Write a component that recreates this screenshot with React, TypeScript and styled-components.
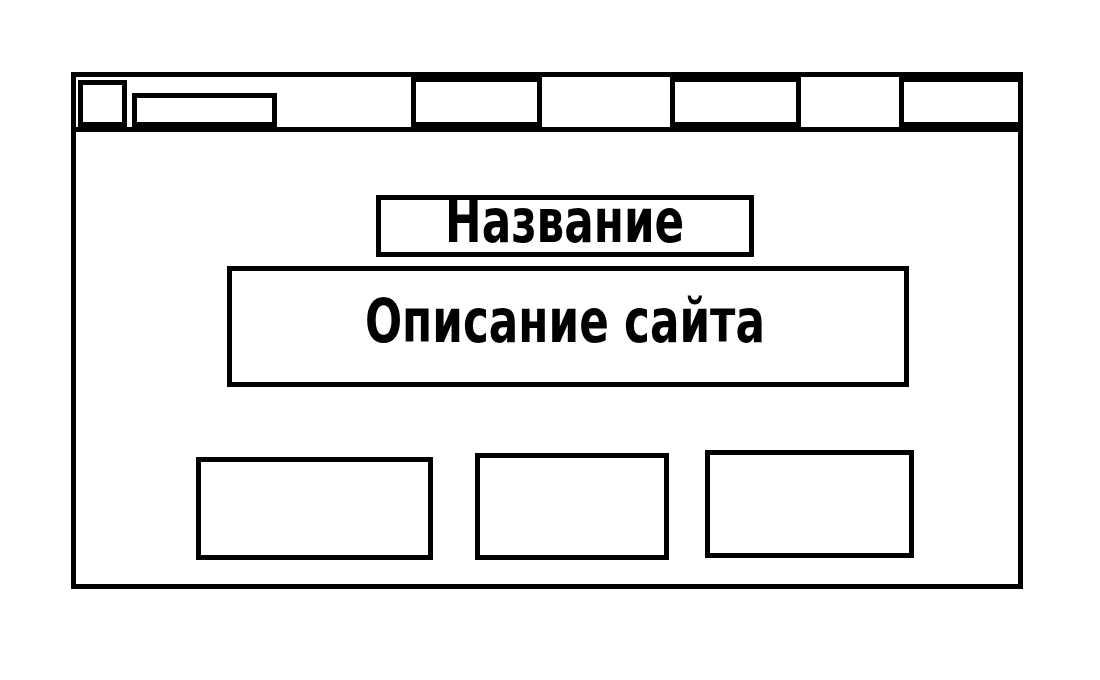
import React, { FC } from 'react';
import styled, { createGlobalStyle } from 'styled-components';

const GlobalStyle = createGlobalStyle`
  html, body {
    margin: 0;
    padding: 0;
    background: #ffffff;
  }

  body {
    font-family: "DejaVu Sans Condensed", "Liberation Sans", sans-serif;
    color: #000;
  }
`;

interface NavItem {
    w: number;
    boxed: boolean;
}

interface CardItem {
    w: number;
    h: number;
    lift: number;
    gap: number;
}

const navItems: NavItem[] = [
    { w: 131, boxed: true },
    { w: 128, boxed: false },
    { w: 131, boxed: true },
    { w: 98, boxed: false },
    { w: 119, boxed: true },
];

const cards: CardItem[] = [
    { w: 237, h: 103, lift: 0, gap: 0 },
    { w: 194, h: 107, lift: 0, gap: 42 },
    { w: 209, h: 108, lift: 2, gap: 36 },
];

const App: FC = () => {
    return (
        <Page>
            <GlobalStyle />
            <Frame>
                <Header>
                    <LogoBox />
                    <SiteNameBox />
                    <Nav>
                        {navItems.map((item, i) => (
                            <NavSlot
                                key={i}
                                $w={item.w}
                                $boxed={item.boxed}
                                $last={i === navItems.length - 1}
                            />
                        ))}
                    </Nav>
                </Header>

                <Main>
                    <TitleBox>
                        <Narrow>Название</Narrow>
                    </TitleBox>
                    <DescriptionBox>
                        <Narrow>Описание сайта</Narrow>
                    </DescriptionBox>

                    <CardsRow>
                        {cards.map((card, i) => (
                            <Card
                                key={i}
                                $w={card.w}
                                $h={card.h}
                                $lift={card.lift}
                                $gap={card.gap}
                            />
                        ))}
                    </CardsRow>
                </Main>
            </Frame>
        </Page>
    );
};

const Page = styled.div`
  width: 1100px;
  height: 680px;
  padding: 72px 0 0 71px;
  box-sizing: border-box;
  background: #fff;
`;

const Frame = styled.div`
  width: 952px;
  height: 517px;
  box-sizing: border-box;
  border: 5px solid #000;
  display: flex;
  flex-direction: column;
`;

const Header = styled.header`
  height: 55px;
  box-sizing: border-box;
  border-bottom: 5px solid #000;
  display: flex;
  align-items: flex-end;
`;

const LogoBox = styled.div`
  width: 49px;
  height: 47px;
  margin-left: 2px;
  box-sizing: border-box;
  border: 5px solid #000;
`;

const SiteNameBox = styled.div`
  width: 145px;
  height: 34px;
  margin-left: 5px;
  box-sizing: border-box;
  border: 5px solid #000;
`;

const Nav = styled.nav`
  margin-left: auto;
  height: 100%;
  display: flex;
`;

const NavSlot = styled.div<{ $w: number; $boxed: boolean; $last: boolean }>`
  width: ${p => p.$w}px;
  height: 100%;
  box-sizing: border-box;
  border: ${p => (p.$boxed ? '5px solid #000' : 'none')};
  border-right: ${p => (p.$last || !p.$boxed ? 'none' : '5px solid #000')};
`;

const Main = styled.main`
  flex: 1;
  display: flex;
  flex-direction: column;
  align-items: flex-start;
  padding-top: 63px;
`;

// the sketch uses a condensed DIN-like face, so squeeze the glyphs
const Narrow = styled.span`
  display: inline-block;
  transform: scaleX(0.81);
  transform-origin: center;
  white-space: nowrap;
`;

const TitleBox = styled.h1`
  margin: 0 0 0 300px;
  width: 378px;
  box-sizing: border-box;
  border: 5px solid #000;
  padding-bottom: 10px;
  font-size: 60px;
  font-weight: 700;
  line-height: 42px;
  text-align: center;
`;

const DescriptionBox = styled.p`
  margin: 9px 0 0 151px;
  width: 682px;
  box-sizing: border-box;
  border: 5px solid #000;
  padding: 0 6px 10px 0;
  font-size: 60px;
  font-weight: 700;
  line-height: 101px;
  text-align: center;
`;

const CardsRow = styled.div`
  margin: 63px 0 0 120px;
  display: flex;
  align-items: flex-end;
`;

const Card = styled.div<{ $w: number; $h: number; $lift: number; $gap: number }>`
  width: ${p => p.$w}px;
  height: ${p => p.$h}px;
  margin-left: ${p => p.$gap}px;
  margin-bottom: ${p => p.$lift}px;
  box-sizing: border-box;
  border: 5px solid #000;
`;

export default App;
